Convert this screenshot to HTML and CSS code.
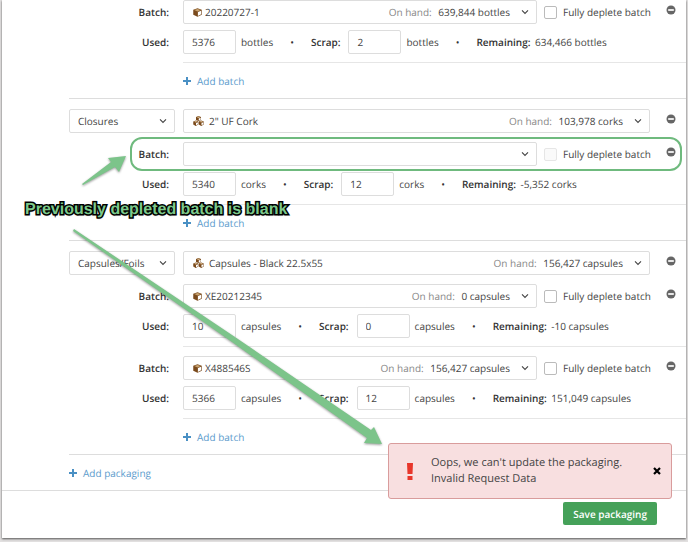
FILE: index.html
```html
<!DOCTYPE html>
<html lang="en">
<head>
    <meta charset="UTF-8">
    <title>Packaging</title>
    <link rel="stylesheet" href="styles.css">
</head>
<body>
<!-- Shared icons -->
<svg class="sprite" aria-hidden="true">
    <symbol id="box" viewBox="0 0 18 18">
        <path d="M9 0.500 L17.500 3.500 V13.500 L9 17.500 L0.500 13.500 V3.500 Z" fill="#7a4a1c"/>
        <path d="M9 1.800 L15.500 4.200 L9 6.800 L2.500 4.200 Z" fill="#c9a471"/>
        <path d="M9.800 8.200 L16.300 5.400 V12.700 L9.800 15.800 Z" fill="#fff"/>
    </symbol>
    <symbol id="boxes" viewBox="0 0 22 20">
        <path d="M11 0 L16 2 V8 L11 10 L6 8 V2 Z M5.500 9 L10.500 11 V17 L5.500 20 L0.500 17 V11 Z M16.500 9 L21.500 11 V17 L16.500 20 L11.500 17 V11 Z" fill="#7a4a1c"/>
        <path d="M11 1 L14.600 2.400 L11 4 L7.400 2.400 Z M5.500 10 L9 11.500 L5.500 13 L2 11.500 Z M16.500 10 L20 11.500 L16.500 13 L13 11.500 Z" fill="#d9b98c"/>
        <path d="M11.500 5 L15.300 3.400 V7.500 L11.500 9 Z M6 14 L9.800 12.400 V16.600 L6 18.700 Z M17 14 L20.800 12.400 V16.600 L17 18.700 Z" fill="#fff"/>
    </symbol>
    <symbol id="chevron" viewBox="0 0 8 6">
        <path d="M1 1.400 L4 4.500 L7 1.400" fill="none" stroke="#444" stroke-width="1.100"/>
    </symbol>
    <symbol id="minus" viewBox="0 0 10 10">
        <circle cx="5" cy="5" r="4.500" fill="#666"/>
        <path d="M2.200 5 H7.800" stroke="#fff" stroke-width="1.700"/>
    </symbol>
    <symbol id="plus" viewBox="0 0 8 8">
        <path d="M4 0 V8 M0 4 H8" stroke="#4a90c4" stroke-width="2"/>
    </symbol>
</svg>

<form class="panel">
    <section class="package">
        <div class="batch">
            <div class="row">
                <label class="name" for="batch1">Batch:</label>
                <div class="picker">
                    <select id="batch1" class="with-box"><option>20220727-1</option></select>
                    <svg class="box"><use href="#box"/></svg>
                    <span class="stock"><span>On hand:</span> 639,844 bottles</span>
                    <svg class="chevron"><use href="#chevron"/></svg>
                </div>
                <label class="deplete"><input type="checkbox"> Fully deplete batch</label>
                <button type="button" class="remove" aria-label="Remove"><svg><use href="#minus"/></svg></button>
            </div>
            <div class="row">
                <label class="name" for="used1">Used:</label>
                <input id="used1" class="qty" type="text" value="5376"><span class="unit">bottles</span>
                <span class="dot">•</span>
                <label class="scrap" for="scrap1">Scrap:</label>
                <input id="scrap1" class="qty" type="text" value="2"><span class="unit">bottles</span>
                <span class="dot">•</span>
                <span><b>Remaining:</b> 634,466 bottles</span>
            </div>
        </div>
        <div class="add-batch"><a href="#" class="add"><svg><use href="#plus"/></svg>Add batch</a></div>
    </section>

    <section class="package">
        <div class="row head">
            <div class="picker type">
                <select aria-label="Packaging type"><option>Closures</option></select>
                <svg class="chevron"><use href="#chevron"/></svg>
            </div>
            <div class="picker">
                <select class="with-boxes" aria-label="Item"><option>2" UF Cork</option></select>
                <svg class="boxes"><use href="#boxes"/></svg>
                <span class="stock"><span>On hand:</span> 103,978 corks</span>
                <svg class="chevron"><use href="#chevron"/></svg>
            </div>
            <button type="button" class="remove" aria-label="Remove"><svg><use href="#minus"/></svg></button>
        </div>
        <div class="batch">
            <div class="row marked">
                <label class="name" for="batch2">Batch:</label>
                <div class="picker">
                    <select id="batch2"><option></option></select>
                    <svg class="chevron"><use href="#chevron"/></svg>
                </div>
                <label class="deplete"><input type="checkbox" disabled> Fully deplete batch</label>
                <button type="button" class="remove" aria-label="Remove"><svg><use href="#minus"/></svg></button>
            </div>
            <div class="row">
                <label class="name" for="used2">Used:</label>
                <input id="used2" class="qty" type="text" value="5340"><span class="unit">corks</span>
                <span class="dot">•</span>
                <label class="scrap" for="scrap2">Scrap:</label>
                <input id="scrap2" class="qty" type="text" value="12"><span class="unit">corks</span>
                <span class="dot">•</span>
                <span><b>Remaining:</b> -5,352 corks</span>
            </div>
        </div>
        <div class="add-batch"><a href="#" class="add"><svg><use href="#plus"/></svg>Add batch</a></div>
    </section>

    <section class="package">
        <div class="row head">
            <div class="picker type">
                <select aria-label="Packaging type"><option>Capsules/Foils</option></select>
                <svg class="chevron"><use href="#chevron"/></svg>
            </div>
            <div class="picker">
                <select class="with-boxes" aria-label="Item"><option>Capsules - Black 22.5x55</option></select>
                <svg class="boxes"><use href="#boxes"/></svg>
                <span class="stock"><span>On hand:</span> 156,427 capsules</span>
                <svg class="chevron"><use href="#chevron"/></svg>
            </div>
            <button type="button" class="remove" aria-label="Remove"><svg><use href="#minus"/></svg></button>
        </div>
        <div class="batch">
            <div class="row">
                <label class="name" for="batch3">Batch:</label>
                <div class="picker">
                    <select id="batch3" class="with-box"><option>XE20212345</option></select>
                    <svg class="box"><use href="#box"/></svg>
                    <span class="stock"><span>On hand:</span> 0 capsules</span>
                    <svg class="chevron"><use href="#chevron"/></svg>
                </div>
                <label class="deplete"><input type="checkbox"> Fully deplete batch</label>
                <button type="button" class="remove" aria-label="Remove"><svg><use href="#minus"/></svg></button>
            </div>
            <div class="row">
                <label class="name" for="used3">Used:</label>
                <input id="used3" class="qty" type="text" value="10"><span class="unit">capsules</span>
                <span class="dot">•</span>
                <label class="scrap" for="scrap3">Scrap:</label>
                <input id="scrap3" class="qty" type="text" value="0"><span class="unit">capsules</span>
                <span class="dot">•</span>
                <span><b>Remaining:</b> -10 capsules</span>
            </div>
        </div>
        <div class="batch">
            <div class="row">
                <label class="name" for="batch4">Batch:</label>
                <div class="picker">
                    <select id="batch4" class="with-box"><option>X488546S</option></select>
                    <svg class="box"><use href="#box"/></svg>
                    <span class="stock"><span>On hand:</span> 156,427 capsules</span>
                    <svg class="chevron"><use href="#chevron"/></svg>
                </div>
                <label class="deplete"><input type="checkbox"> Fully deplete batch</label>
                <button type="button" class="remove" aria-label="Remove"><svg><use href="#minus"/></svg></button>
            </div>
            <div class="row">
                <label class="name" for="used4">Used:</label>
                <input id="used4" class="qty" type="text" value="5366"><span class="unit">capsules</span>
                <span class="dot">•</span>
                <label class="scrap" for="scrap4">Scrap:</label>
                <input id="scrap4" class="qty" type="text" value="12"><span class="unit">capsules</span>
                <span class="dot">•</span>
                <span><b>Remaining:</b> 151,049 capsules</span>
            </div>
        </div>
        <div class="add-batch"><a href="#" class="add"><svg><use href="#plus"/></svg>Add batch</a></div>
    </section>

    <div class="add-packaging"><a href="#" class="add"><svg><use href="#plus"/></svg>Add packaging</a></div>

    <footer class="footer">
        <button type="submit" class="save">Save packaging</button>
    </footer>

    <!-- Callouts -->
    <svg class="arrows" aria-hidden="true">
        <path d="M82 184 L111 162 L108 158 L126 156 L119 172 L115 167 L83 185 Z"/>
        <path d="M73 231 L74 229 L235 337 L371 430 L374 427 L382 444 L364 443 L367 438 L232 342 Z"/>
    </svg>
    <div class="note">Previously depleted batch is blank</div>

    <div class="toast" role="alert">
        <svg class="bang" viewBox="0 0 6 17"><path d="M0 0 H6 L5.500 11 H0.500 Z M0.500 13 H5.500 V17 H0.500 Z" fill="#e8352a"/></svg>
        <p>Oops, we can't update the packaging.<br>Invalid Request Data</p>
        <button type="button" class="close" aria-label="Close"><svg viewBox="0 0 8 8"><path d="M1 1 L7 7 M7 1 L1 7" stroke="#000" stroke-width="2.200"/></svg></button>
    </div>
</form>
</body>
</html>
```
FILE: styles.css
```css
* { box-sizing: border-box; }
body { margin: 0; padding: 0 2px 4px; background: #e2e0e0; color: #444; font: 10px/16px "Open Sans", sans-serif; text-rendering: geometricPrecision; }
input, select, button { font: inherit; color: inherit; text-rendering: inherit; }
svg { display: block; }
b, .name, .scrap { font-weight: 600; color: #333; }
.sprite { position: absolute; width: 0; height: 0; }
.panel { position: relative; margin: 0; background: #fff; box-shadow: 0 1px 2px #555; }

/* packages */
.package { margin-left: 67px; border-bottom: 1px solid #ddd; }
.row { display: flex; align-items: center; height: 24px; }
.head { margin: 10px 0 9px; }
.batch .row + .row { margin-top: 6px; }
.batch::after { content: ""; display: block; margin: 8px 0 0 114px; border-top: 1px solid #e6e6e6; }
.batch + .batch { margin-top: 9px; }
.name { width: 100px; margin-right: 14px; text-align: right; }

/* drop-downs */
.picker { flex: 1; display: grid; grid-template-columns: auto 1fr auto auto; align-items: center; }
.picker.type { flex: none; width: 106px; margin-right: 8px; }
.picker select { grid-area: 1 / 1 / 2 / 5; width: 100%; height: 24px; padding: 0 8px; appearance: none; background: #fff; border: 1px solid #ddd; border-radius: 2px; }
.picker .with-box { padding-left: 21px; }
.picker .with-boxes { padding-left: 25px; }
.picker svg, .stock { pointer-events: none; z-index: 1; }
.box { grid-area: 1 / 1; width: 9px; height: 9px; margin-left: 10px; }
.boxes { grid-area: 1 / 1; width: 11px; height: 10px; margin-left: 10px; }
.stock { grid-area: 1 / 3; margin-right: 11px; }
.stock span { margin-right: 4px; color: #888; }
.chevron { grid-area: 1 / 4; width: 8px; height: 6px; margin-right: 8px; }

.deplete { display: flex; align-items: center; gap: 6px; width: 113px; padding-left: 7px; white-space: nowrap; }
.deplete input { appearance: none; flex: none; width: 13px; height: 13px; margin: 0; background: #fff; border: 1px solid #bbb; border-radius: 2px; }
.deplete input:disabled { background: #fafafa; border-color: #e6e6e6; }
.remove { width: 36px; height: 24px; padding: 0 0 4px 16px; background: none; border: none; }
.remove svg { width: 10px; height: 10px; }

.qty { width: 53px; height: 24px; padding: 0 8px; background: #fff; border: 1px solid #ddd; border-radius: 2px; }
.unit { margin-left: 5px; }
.dot { margin: 0 17px; color: #333; }
.scrap { margin-right: 8px; }
.row b { margin-right: 2px; }

/* links */
.add { display: inline-flex; align-items: center; gap: 6px; color: #5b9bcc; text-decoration: none; }
.add svg { width: 8px; height: 8px; }
.add-batch { display: flex; align-items: center; height: 35px; margin-left: 114px; }
.add-packaging { display: flex; align-items: center; height: 35px; margin-left: 67px; }

.footer { display: flex; justify-content: flex-end; padding: 11px 29px 13px; border-top: 1px solid #ddd; }
.save { height: 23px; padding: 0 10px; background: #45a159; border: none; border-radius: 2px; color: #fff; font-weight: 600; }

/* callouts */
.marked { position: relative; }
.marked::before { content: ""; position: absolute; inset: -5px 4px -5px 61px; border: 2px solid #6fba7e; border-radius: 12px; pointer-events: none; }
.arrows { position: absolute; top: 0; left: -2px; width: 688px; height: 538px; fill: #7cc48a; filter: drop-shadow(0 1px 1px #0006); pointer-events: none; }
.note { position: absolute; top: 200px; left: 23px; font: bold 16px/20px "Liberation Sans", sans-serif; color: #7cc98b; -webkit-text-stroke: 3px #000; paint-order: stroke; text-shadow: 0 1px 2px #0006; white-space: nowrap; }

.toast { position: absolute; right: 14px; bottom: 39px; display: flex; align-items: center; width: 284px; padding: 11px 10px 11px 18px; background: #f8dfe0; border: 1px solid #d99c9c; border-radius: 3px; font-size: 11px; }
.toast p { flex: 1; margin: 0 0 0 18px; }
.bang { width: 6px; height: 17px; }
.close { padding: 0; background: none; border: none; }
.close svg { width: 8px; height: 8px; }
```
